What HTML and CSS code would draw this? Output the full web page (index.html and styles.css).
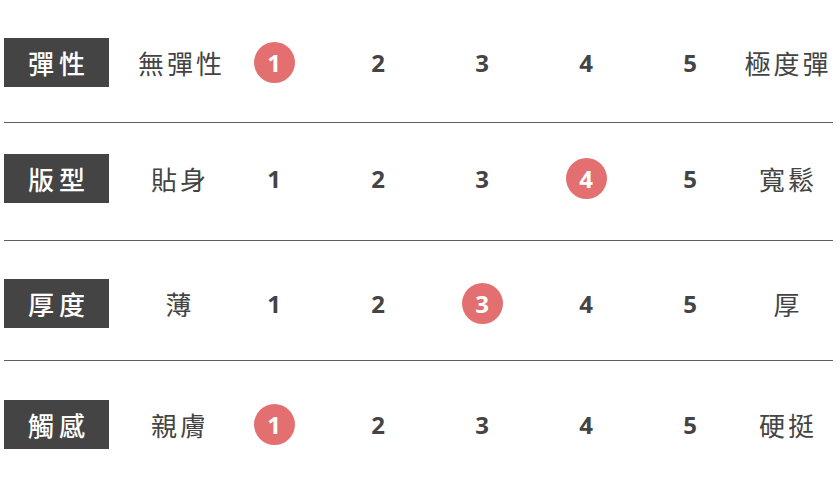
FILE: index.html
```html
<!DOCTYPE html>
<html lang="zh-Hant">
<head>
<meta charset="utf-8">
<link rel="stylesheet" href="styles.css">
</head>
<body>
<div class="chart">
  <div class="row">
    <div class="tag">彈性</div>
    <div class="low">無彈性</div>
    <div class="num"><span class="dot">1</span></div>
    <div class="num">2</div>
    <div class="num">3</div>
    <div class="num">4</div>
    <div class="num">5</div>
    <div class="high">極度彈</div>
  </div>
  <div class="row">
    <div class="tag">版型</div>
    <div class="low">貼身</div>
    <div class="num">1</div>
    <div class="num">2</div>
    <div class="num">3</div>
    <div class="num"><span class="dot">4</span></div>
    <div class="num">5</div>
    <div class="high">寬鬆</div>
  </div>
  <div class="row">
    <div class="tag">厚度</div>
    <div class="low">薄</div>
    <div class="num">1</div>
    <div class="num">2</div>
    <div class="num"><span class="dot">3</span></div>
    <div class="num">4</div>
    <div class="num">5</div>
    <div class="high">厚</div>
  </div>
  <div class="row">
    <div class="tag">觸感</div>
    <div class="low">親膚</div>
    <div class="num"><span class="dot">1</span></div>
    <div class="num">2</div>
    <div class="num">3</div>
    <div class="num">4</div>
    <div class="num">5</div>
    <div class="high">硬挺</div>
  </div>
</div>
</body>
</html>
```
FILE: styles.css
```css
html, body {
  margin: 0;
  padding: 0;
  background: #fff;
}
.chart {
  width: 829px;
  margin-left: 4px;
  font-family: "Noto Sans CJK TC", "Noto Sans", sans-serif;
  color: #444;
}
.row {
  display: grid;
  grid-template-columns: 105px 113px repeat(5, 104px) 1fr;
  align-items: center;
  border-bottom: 1px solid #5e5e5e;
}
.row:nth-child(1) { padding: 38px 0 35px; }
.row:nth-child(2) { padding: 31px 0 37px; }
.row:nth-child(3) { padding: 38px 0 32px; }
.row:nth-child(4) { padding: 39px 0 0; border-bottom: none; }
.tag {
  height: 49px;
  background: #444;
  color: #fff;
  font-size: 26px;
  font-weight: 500;
  letter-spacing: 5px;
  display: flex;
  align-items: center;
  justify-content: center;
  padding-left: 5px;
  box-sizing: border-box;
}
.low {
  font-size: 26px;
  font-weight: 400;
  letter-spacing: 3px;
  text-align: center;
  white-space: nowrap;
  padding-left: 29px;
}
.high {
  font-size: 26px;
  font-weight: 400;
  letter-spacing: 3px;
  text-align: center;
  white-space: nowrap;
  padding-left: 1px;
}
.num {
  font-family: "Open Sans", "Noto Sans", sans-serif;
  font-weight: 700;
  font-size: 24px;
  text-align: center;
  display: flex;
  justify-content: center;
  align-items: center;
}
.dot {
  width: 41px;
  height: 41px;
  border-radius: 50%;
  background: #e46f71;
  color: #fff;
  display: flex;
  align-items: center;
  justify-content: center;
}
```
